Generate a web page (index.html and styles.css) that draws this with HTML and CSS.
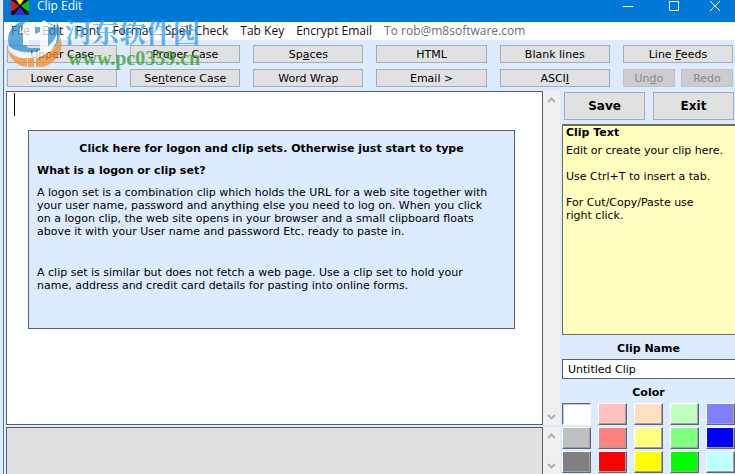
FILE: index.html
```html
<!DOCTYPE html>
<html lang="en">
<head>
    <meta charset="UTF-8">
    <meta name="viewport" content="width=device-width, initial-scale=1.0">
    <title>Clip Edit</title>
    <link rel="stylesheet" href="styles.css">
</head>
<body>

<div class="window">
    <header class="title-bar">
        <svg class="app-icon" width="18" height="18" viewBox="0 0 18 18" aria-hidden="true">
            <rect width="18" height="18" fill="#101010"/>
            <path d="M3 0h12L9 8z" fill="#f4ee20"/>
            <path d="M0 3v12l8-6z" fill="#e01818"/>
            <path d="M18 3v12l-8-6z" fill="#18b828"/>
            <path d="M3 18h12L9 10z" fill="#2430d8"/>
        </svg>
        <h1>Clip Edit</h1>
        <div class="window-buttons">
            <button type="button" aria-label="Minimize"><svg width="12" height="12" viewBox="0 0 12 12"><path d="M1 6.500h10"/></svg></button>
            <button type="button" aria-label="Maximize"><svg width="12" height="12" viewBox="0 0 12 12"><path d="M1.500 1.500h9v9h-9z"/></svg></button>
            <button type="button" aria-label="Close"><svg width="12" height="12" viewBox="0 0 12 12"><path d="M1 1l10 10M11 1L1 11"/></svg></button>
        </div>
    </header>

    <nav class="menu">
        <a href="#">File</a>
        <a href="#">Edit</a>
        <a href="#">Font</a>
        <a href="#">Format</a>
        <a href="#">Spell Check</a>
        <a href="#">Tab Key</a>
        <a href="#">Encrypt Email</a>
        <a href="#" class="muted">To rob@m8software.com</a>
    </nav>

    <div class="toolbar">
        <button type="button">Upper Case</button>
        <button type="button">Proper Case</button>
        <button type="button">Sp<u>a</u>ces</button>
        <button type="button">HTML</button>
        <button type="button">Blank lines</button>
        <button type="button">Line <u>F</u>eeds</button>
        <button type="button">Lower Case</button>
        <button type="button">Se<u>n</u>tence Case</button>
        <button type="button">Word Wrap</button>
        <button type="button">Email &gt;</button>
        <button type="button">ASCI<u>I</u></button>
        <div class="history">
            <button type="button" disabled>Un<u>d</u>o</button>
            <button type="button" disabled>Redo</button>
        </div>
    </div>

    <main class="workspace">
        <div class="panes">
            <section class="pane">
                <div class="editor">
                    <textarea aria-label="Clip"></textarea>
                    <span class="caret"></span>
                    <div class="help">
                        <a href="#" class="help-link">Click here for logon and clip sets. Otherwise just start to type</a>
                        <h2>What is a logon or clip set?</h2>
                        <p>A logon set is a combination clip which holds the URL for a web site together with your user name, password and anything else you need to log on. When you click on a logon clip, the web site opens in your browser and a small clipboard floats above it with your User name and password Etc. ready to paste in.</p>
                        <p class="second">A clip set is similar but does not fetch a web page. Use a clip set to hold your name, address and credit card details for pasting into online forms.</p>
                    </div>
                </div>
                <div class="scrollbar">
                    <button type="button" aria-label="Scroll up"><svg width="9" height="6" viewBox="0 0 9 6"><path d="M1 5l3.500-3.500L8 5"/></svg></button>
                    <button type="button" aria-label="Scroll down"><svg width="9" height="6" viewBox="0 0 9 6"><path d="M1 1l3.500 3.500L8 1"/></svg></button>
                </div>
            </section>
            <section class="pane notes-pane">
                <textarea class="notes" aria-label="Notes" disabled></textarea>
                <div class="scrollbar">
                    <button type="button" aria-label="Scroll up"><svg width="9" height="6" viewBox="0 0 9 6"><path d="M1 5l3.500-3.500L8 5"/></svg></button>
                    <button type="button" aria-label="Scroll down"><svg width="9" height="6" viewBox="0 0 9 6"><path d="M1 1l3.500 3.500L8 1"/></svg></button>
                </div>
            </section>
        </div>

        <aside class="side">
            <div class="actions">
                <button type="button">Save</button>
                <button type="button">Exit</button>
            </div>
            <div class="clip-text">
                <h2>Clip Text</h2>
                <p>Edit or create your clip here.</p>
                <p>Use Ctrl+T to insert a tab.</p>
                <p>For Cut/Copy/Paste use<br>right click.</p>
            </div>
            <label class="side-label" for="clipName">Clip Name</label>
            <input type="text" class="clip-name" id="clipName" value="Untitled Clip">
            <h2 class="side-label" id="colorLabel">Color</h2>
            <div class="swatches" role="radiogroup" aria-labelledby="colorLabel">
                <input type="radio" name="color" class="white" aria-label="White" checked>
                <input type="radio" name="color" class="pink" aria-label="Pink">
                <input type="radio" name="color" class="peach" aria-label="Peach">
                <input type="radio" name="color" class="mint" aria-label="Mint">
                <input type="radio" name="color" class="violet" aria-label="Violet">
                <input type="radio" name="color" class="silver" aria-label="Silver">
                <input type="radio" name="color" class="coral" aria-label="Coral">
                <input type="radio" name="color" class="lemon" aria-label="Lemon">
                <input type="radio" name="color" class="light-green" aria-label="Light green">
                <input type="radio" name="color" class="blue" aria-label="Blue">
                <input type="radio" name="color" class="gray" aria-label="Gray">
                <input type="radio" name="color" class="red" aria-label="Red">
                <input type="radio" name="color" class="yellow" aria-label="Yellow">
                <input type="radio" name="color" class="green" aria-label="Green">
                <input type="radio" name="color" class="cyan" aria-label="Cyan">
            </div>
        </aside>
    </main>
</div>

<div class="watermark">
    <svg width="60" height="50" viewBox="0 0 60 50" aria-hidden="true">
        <path d="M4 28C0 14 9 3 24 2c-6 4-9 7-10 11h7v13c0 3 2 4 5 4h9V14l-5 2V9l10-6c9 3 13 8 13 14-4 11-14 16-26 17C16 34 8 32 4 28z" fill="#2f8fd0"/>
        <path d="M52 4c4 7 4 15 0 22-3 4-6 6-9 8V25c5-5 8-12 9-21z" fill="#2f8fd0"/>
        <path d="M2 26c7 8 15 11 25 9 12-2 21-9 25-19 1 11-7 20-19 24C19 44 7 38 2 26z" fill="#fff"/>
        <path d="M14 15l7-7 7 7h-4v12h-6V15zM30 9l9-7 10 7h-6v26h-8V9z" fill="#fff"/>
        <path d="M2 31c5 7 12 10 20 9v9C12 48 5 41 2 31zM31 40c13-3 21-10 24-21 5 12-3 26-17 30h-7z" fill="#f58c2a"/>
        <path d="M23 40h6v9h-6z" fill="#f58c2a"/>
    </svg>
    <div class="watermark-text">
        <span class="site-name" lang="zh">河东软件园</span>
        <span class="site-url">www.pc0359.cn</span>
    </div>
</div>

</body>
</html>
```

FILE: styles.css
```css
* {
    box-sizing: border-box;
}
body {
    margin: 0;
    background-color: #dcebff;
    color: #000;
    font: 11px/13px "DejaVu Sans", Verdana, sans-serif;
}
h1, h2, p {
    margin: 0;
}
h2 {
    font-size: 11px;
}
button, input, textarea {
    font: inherit;
    color: inherit;
    margin: 0;
    padding: 0;
}
.window {
    display: flex;
    flex-direction: column;
    height: 100vh;
    margin-left: 3px;
    border-left: 1px solid #4b7ba8;
    overflow: hidden;
}

/* title bar and menu */
.title-bar {
    display: flex;
    align-items: center;
    height: 22px;
    padding: 0 2px 10px 7px;
    background-color: #0078d7;
    color: #fff;
}
.app-icon {
    flex: none;
    margin-right: 8px;
}
.title-bar h1 {
    font: 12px/12px "Open Sans", "Segoe UI", sans-serif;
}
.window-buttons {
    display: flex;
    margin-left: auto;
}
.window-buttons button {
    display: flex;
    align-items: center;
    justify-content: center;
    width: 46px;
    height: 12px;
    border: none;
    background: none;
}
.window-buttons button:last-child {
    width: 36px;
}
.window-buttons path {
    fill: none;
    stroke: #fff;
}
.menu {
    display: flex;
    align-items: center;
    gap: 12px;
    height: 18px;
    padding-left: 7px;
    background-color: #fff;
    font: 12px/18px "Open Sans", "Segoe UI", sans-serif;
    white-space: nowrap;
}
.menu a {
    color: #111;
    text-decoration: none;
}
.menu .muted {
    color: #6d6d6d;
}

/* toolbar */
.toolbar {
    display: grid;
    grid-template-columns: repeat(6, 1fr);
    gap: 6px 13px;
    padding: 5px 2px 4px 3px;
}
.toolbar button, .actions button {
    border: 1px solid #a3adb8;
    background-color: #e1e1e1;
}
.toolbar button {
    height: 18px;
}
.toolbar button:disabled {
    border-color: #bfc3c9;
    background-color: #cccccc;
    color: #8a8a8a;
}
.history {
    display: grid;
    grid-template-columns: 1fr 1fr;
    gap: 6px;
}

/* workspace */
.workspace {
    display: flex;
    flex: 1;
    min-height: 0;
}
.panes {
    display: flex;
    flex: 1;
    flex-direction: column;
    gap: 2px;
    padding-left: 2px;
}
.pane {
    display: flex;
    flex: 1;
}
.notes-pane {
    flex: 0 0 47px;
}
.editor {
    position: relative;
    flex: 1;
    border: 1px solid #56616e;
    background-color: #fff;
}
.editor textarea {
    position: absolute;
    inset: 0;
    width: 100%;
    height: 100%;
    padding: 2px 8px;
    border: none;
    outline: none;
    resize: none;
}
.caret {
    position: absolute;
    top: 1px;
    left: 7px;
    width: 1px;
    height: 23px;
    background-color: #000;
}
.notes {
    flex: 1;
    border: 1px solid #56616e;
    border-bottom: none;
    background-color: #e0e0e0;
    resize: none;
}
.scrollbar {
    display: flex;
    flex-direction: column;
    justify-content: space-between;
    width: 17px;
    background-color: #f0f0f0;
}
.scrollbar button {
    height: 17px;
    border: none;
    background: none;
}
.scrollbar svg {
    display: block;
    margin: auto;
}
.scrollbar path {
    fill: none;
    stroke: #b0b0b0;
    stroke-width: 2;
}
.help {
    position: absolute;
    top: 38px;
    left: 21px;
    right: 27px;
    min-height: 199px;
    padding: 11px 8px;
    border: 1px solid #56616e;
    background-color: #dcebff;
}
.help-link {
    display: block;
    margin-bottom: 9px;
    color: #000;
    font-weight: bold;
    text-align: center;
    text-decoration: none;
}
.help h2 {
    margin-bottom: 9px;
}
.help p {
    padding-right: 14px;
}
.help .second {
    margin-top: 28px;
}

/* right column */
.side {
    display: flex;
    flex-direction: column;
    width: 175px;
    padding: 1px 0 1px 2px;
}
.actions {
    display: grid;
    grid-template-columns: 1fr 1fr;
    gap: 8px;
    padding: 0 1px 0 2px;
    margin-bottom: 4px;
}
.actions button {
    height: 28px;
    font-size: 12px;
    font-weight: bold;
}
.clip-text {
    flex: 1;
    padding: 0 3px;
    border: 1px solid #6b6f58;
    border-width: 2px 0 1px 1px;
    background-color: #ffffc0;
}
.clip-text h2 {
    margin-bottom: 5px;
}
.clip-text p {
    margin-bottom: 13px;
}
.side-label {
    display: block;
    padding: 7px 0 4px;
    font-weight: bold;
    text-align: center;
}
.clip-name {
    width: 100%;
    height: 20px;
    padding: 0 5px;
    border: 1px solid #56616e;
    border-right: none;
    background-color: #fff;
}
.swatches {
    display: grid;
    grid-template-columns: repeat(5, 29px);
    justify-content: space-between;
    row-gap: 2px;
}
.swatches input {
    appearance: none;
    width: 29px;
    height: 22px;
    border: 1px solid;
    border-color: #fff #5f6670 #5f6670 #fff;
    box-shadow: inset -1px -1px #a0a0a0;
}
.swatches input:checked {
    border-color: #5f6670 #fff #fff #5f6670;
    box-shadow: inset 1px 1px #c8c8c8;
}
.white { background-color: #ffffff; }
.pink { background-color: #ffc0c0; }
.peach { background-color: #ffe0c0; }
.mint { background-color: #c0ffc0; }
.violet { background-color: #8080ff; }
.silver { background-color: #c0c0c0; }
.coral { background-color: #ff8080; }
.lemon { background-color: #ffff80; }
.light-green { background-color: #80ff80; }
.blue { background-color: #0000ff; }
.gray { background-color: #808080; }
.red { background-color: #ff0000; }
.yellow { background-color: #ffff00; }
.green { background-color: #00ff00; }
.cyan { background-color: #c0ffff; }

/* site mark over the top left corner */
.watermark {
    position: absolute;
    top: 18px;
    left: 5px;
    display: flex;
    opacity: 0.75;
    pointer-events: none;
}
.watermark-text {
    display: flex;
    flex-direction: column;
}
.site-name {
    color: #2f97f5;
    font: bold 27px/28px "Noto Serif CJK SC", "Noto Sans CJK SC", sans-serif;
}
.site-url {
    padding-left: 3px;
    color: #2fa02c;
    font: bold 20px/24px "Liberation Serif", "Times New Roman", serif;
}
```
